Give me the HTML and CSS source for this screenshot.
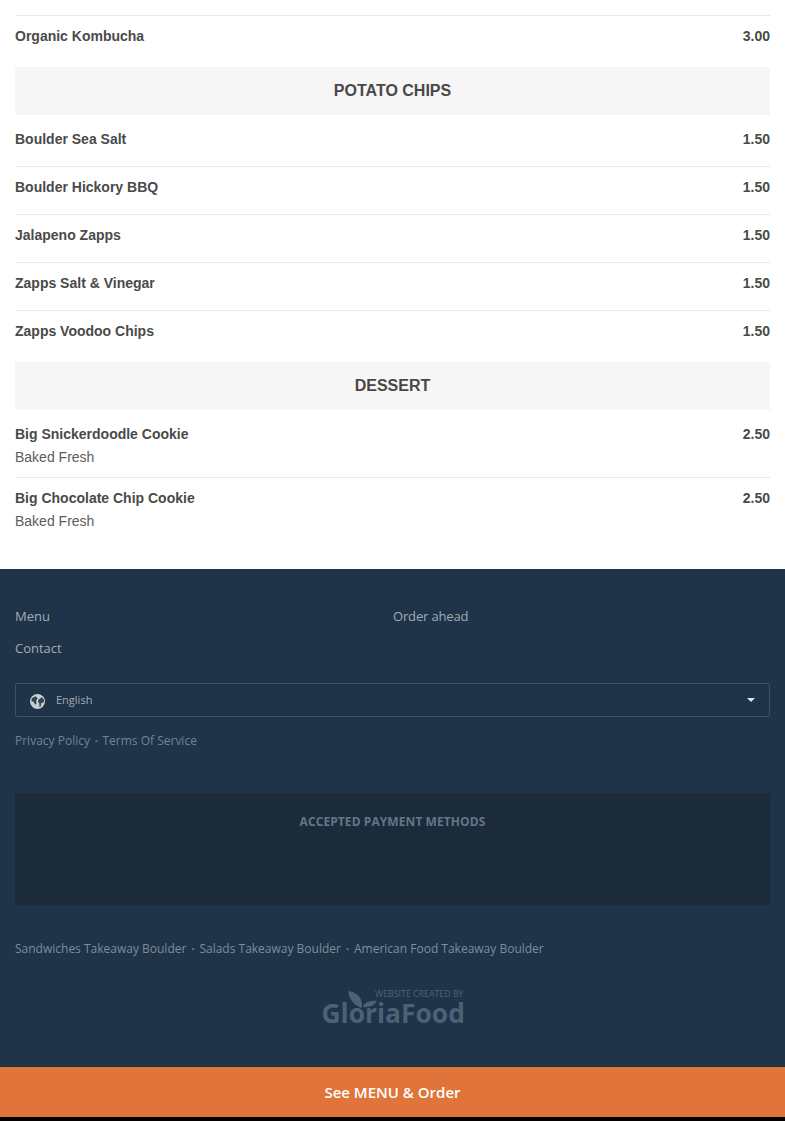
FILE: index.html
```html
<!DOCTYPE html>
<html lang="en">
<head>
<meta charset="utf-8">
<title>Menu</title>
<link rel="stylesheet" href="styles.css">
</head>
<body>
<main class="menu">
  <div class="top-rule"></div>
  <div class="item"><div class="line"><span>Organic Kombucha</span><span>3.00</span></div></div>
  <h2 class="cat">POTATO CHIPS</h2>
  <div class="item ruled"><div class="line"><span>Boulder Sea Salt</span><span>1.50</span></div></div>
  <div class="item ruled"><div class="line"><span>Boulder Hickory BBQ</span><span>1.50</span></div></div>
  <div class="item ruled"><div class="line"><span>Jalapeno Zapps</span><span>1.50</span></div></div>
  <div class="item ruled"><div class="line"><span>Zapps Salt &amp; Vinegar</span><span>1.50</span></div></div>
  <div class="item"><div class="line"><span>Zapps Voodoo Chips</span><span>1.50</span></div></div>
  <h2 class="cat">DESSERT</h2>
  <div class="item ruled tall"><div class="line"><span>Big Snickerdoodle Cookie</span><span>2.50</span></div><div class="desc">Baked Fresh</div></div>
  <div class="item tall"><div class="line"><span>Big Chocolate Chip Cookie</span><span>2.50</span></div><div class="desc">Baked Fresh</div></div>
</main>
<footer class="footer">
  <nav class="nav">
    <a>Menu</a><a class="tight">Order ahead</a><a>Contact</a>
  </nav>
  <div class="lang">
    <svg class="globe" viewBox="0 0 16 16" width="15" height="15"><circle cx="8" cy="8" r="8" fill="#c9ced3"/><path d="M2 4.500 6 2.500l2 2-1.500 3L7 10l-1.500 1.500L4 8.500 1.500 7.500zM9 6l3.500-2.500L15 6l-.5 3-2.500.5-.5 3.500-1.500 1L10 10 8.500 8z" fill="#33424f"/></svg>
    <span class="lang-name">English</span>
    <span class="caret"></span>
  </div>
  <div class="legal"><a>Privacy Policy</a><i>•</i><a>Terms Of Service</a></div>
  <section class="pay"><h3>ACCEPTED PAYMENT METHODS</h3></section>
  <div class="seo"><a>Sandwiches Takeaway Boulder</a><i>•</i><a>Salads Takeaway Boulder</a><i>•</i><a>American Food Takeaway Boulder</a></div>
  <div class="brand">
    <svg class="leaf" viewBox="0 0 30 18" width="30" height="18"><path d="M0 0c8 1 15 6 14 17C7 15 1 9 0 0z" fill="#4d6174"/><path d="M15 16c1-5 7-7 14-6-3 5-8 7-14 6z" fill="#4d6174"/></svg>
    <div class="brand-by">WEBSITE CREATED BY</div>
    <div class="brand-name">GloriaFood</div>
  </div>
</footer>
<a class="cta">See MENU &amp; Order</a>
<div class="bottom"></div>
</body>
</html>
```
FILE: styles.css
```css
* { box-sizing: border-box; }
html, body { margin: 0; padding: 0; background: #fff; }
body { font-family: "Liberation Sans", Arial, sans-serif; }
.menu { padding: 0 15px 28px; color: #4a4a4a; }
.top-rule { height: 16px; border-bottom: 1px solid #e9e9e9; }
.item { height: 47px; padding-top: 10px; }
.item.ruled { height: 48px; border-bottom: 1px solid #e9e9e9; }
.item.tall { height: 63px; }
.item.tall.ruled { height: 64px; }
.line { display: flex; justify-content: space-between; font-size: 14px; font-weight: 700; line-height: 20px; }
.desc { font-size: 14px; line-height: 20px; margin-top: 3px; color: #5c5c5c; }
.cat { margin: 4px 0; height: 48px; background: #f6f6f6; font-size: 16px; line-height: 47px; font-weight: 700; text-align: center; color: #484848; }
.footer { background: #1f3349; height: 498px; padding: 37px 15px 0; font-family: "Open Sans", sans-serif; color: #a4acb4; }
.nav { display: grid; grid-template-columns: 378px 1fr; row-gap: 12px; font-size: 13px; line-height: 20px; }
.tight { letter-spacing: -.15px; }
.lang { margin-top: 25px; height: 34px; border: 1px solid #3f5366; border-radius: 2px; display: flex; align-items: center; padding: 0 14px 0 14px; }
.globe { flex: none; margin-top: 2px; }
.lang-name { margin: 0 0 2px 11px; font-size: 11px; color: #a4acb4; flex: 1; }
.caret { width: 0; height: 0; border-left: 4.500px solid transparent; border-right: 4.500px solid transparent; border-top: 4px solid #dde3e8; }
.legal { margin-top: 14px; font-size: 12px; line-height: 20px; color: #748392; }
.legal i, .seo i { font-style: normal; font-size: 8px; margin: 0 4.750px; vertical-align: 1px; }
.seo i { margin: 0 5px; }
.pay { margin-top: 42px; height: 112px; background: #1b2b3a; padding-top: 19px; }
.pay h3 { margin: 0; font-size: 12px; line-height: 20px; font-weight: 700; letter-spacing: .08px; text-align: center; color: #64758a; }
.seo { margin-top: 34px; font-size: 12px; line-height: 20px; color: #7e8d9b; }
.brand { position: relative; width: 142px; margin: 30px auto 0; color: #4d6174; }
.leaf { position: absolute; left: 26px; top: 2px; }
.brand-by { font-size: 8.800px; line-height: 10px; white-space: nowrap; text-align: right; color: #4f6376; }
.brand-name { margin-top: 4px; font-size: 26.400px; line-height: 20px; font-weight: 700; white-space: nowrap; }
.cta { display: block; height: 50px; background: #e1743b; color: #fff; font-family: "Open Sans", sans-serif; font-size: 15px; font-weight: 600; line-height: 50px; text-align: center; }
.bottom { height: 4px; background: #000; }
```
